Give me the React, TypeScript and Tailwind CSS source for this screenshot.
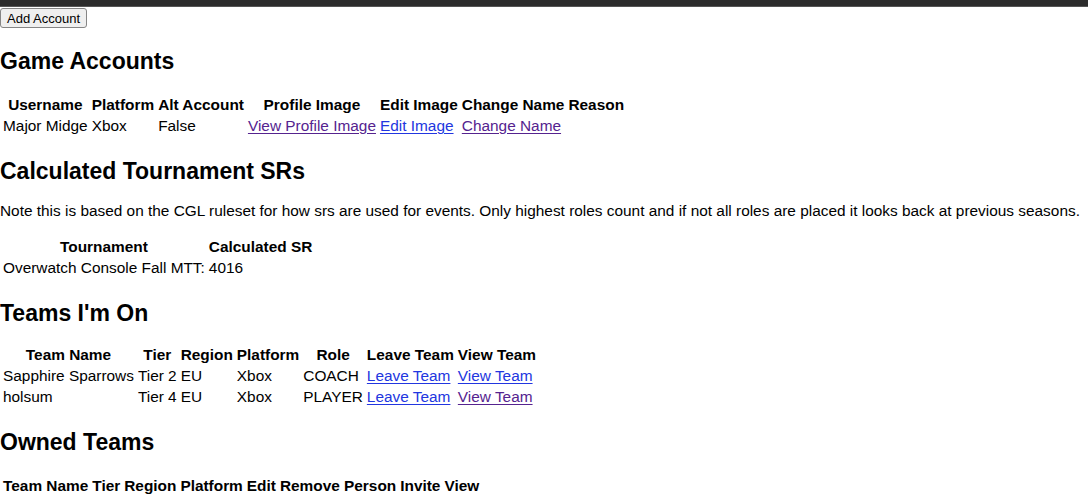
const th = "px-[1px] py-[1px] font-bold text-center"
const td = "px-[1px] py-[1px] text-left"
const blue = "text-[#2236e0] underline underline-offset-2"
const purple = "text-[#55238f] underline underline-offset-2"

const Heading = ({ children, className }: { children: React.ReactNode; className: string }) => (
    <h2 className={`text-[23px] font-bold leading-[26px] text-black ${className}`}>{children}</h2>
)

const Table = ({ children }: { children: React.ReactNode }) => (
    <table className="border-separate border-spacing-[2px]">
        <tbody>{children}</tbody>
    </table>
)

export default function App() {
    return (
        <div className="min-h-screen bg-white text-black font-['Liberation_Sans',Arial,sans-serif] text-[15.4px] leading-[17px]">
            <div className="h-[7px] bg-[#2c2c2c] border-b border-[#555]" />
            <div className="h-[21px] pt-[1px]">
                <button className="h-[20px] bg-[#efefef] border border-[#858585] rounded-[3px] px-[6px] text-[13px] leading-[normal] text-black">
                    Add Account
                </button>
            </div>

            <Heading className="mt-[20px] mb-[19px]">Game Accounts</Heading>
            <Table>
                <tr>
                    <th className={th}>Username</th>
                    <th className={th}>Platform</th>
                    <th className={th}>Alt Account</th>
                    <th className={th}>Profile Image</th>
                    <th className={th}>Edit Image</th>
                    <th className={th}>Change Name</th>
                    <th className={th}>Reason</th>
                </tr>
                <tr>
                    <td className={td}>Major Midge</td>
                    <td className={td}>Xbox</td>
                    <td className={td}>False</td>
                    <td className={td}><a href="#" className={purple}>View Profile Image</a></td>
                    <td className={td}><a href="#" className={blue}>Edit Image</a></td>
                    <td className={td}><a href="#" className={purple}>Change Name</a></td>
                    <td className={td}></td>
                </tr>
            </Table>

            <Heading className="mt-[21px] mb-[18px]">Calculated Tournament SRs</Heading>
            <p className="mt-0 mb-[16px]">
                Note this is based on the CGL ruleset for how srs are used for events. Only highest roles count and if not all roles are placed it looks back at previous seasons.
            </p>
            <Table>
                <tr>
                    <th className={th}>Tournament</th>
                    <th className={th}>Calculated SR</th>
                </tr>
                <tr>
                    <td className={td}>Overwatch Console Fall MTT:</td>
                    <td className={td}>4016</td>
                </tr>
            </Table>

            <Heading className="mt-[21px] mb-[17px]">Teams I'm On</Heading>
            <Table>
                <tr>
                    <th className={th}>Team Name</th>
                    <th className={th}>Tier</th>
                    <th className={th}>Region</th>
                    <th className={th}>Platform</th>
                    <th className={th}>Role</th>
                    <th className={th}>Leave Team</th>
                    <th className={th}>View Team</th>
                </tr>
                <tr>
                    <td className={td}>Sapphire Sparrows</td>
                    <td className={td}>Tier 2</td>
                    <td className={td}>EU</td>
                    <td className={td}>Xbox</td>
                    <td className={td}>COACH</td>
                    <td className={td}><a href="#" className={blue}>Leave Team</a></td>
                    <td className={td}><a href="#" className={blue}>View Team</a></td>
                </tr>
                <tr>
                    <td className={td}>holsum</td>
                    <td className={td}>Tier 4</td>
                    <td className={td}>EU</td>
                    <td className={td}>Xbox</td>
                    <td className={td}>PLAYER</td>
                    <td className={td}><a href="#" className={blue}>Leave Team</a></td>
                    <td className={td}><a href="#" className={purple}>View Team</a></td>
                </tr>
            </Table>

            <Heading className="mt-[21px] mb-[19px]">Owned Teams</Heading>
            <Table>
                <tr>
                    <th className={th}>Team Name</th>
                    <th className={th}>Tier</th>
                    <th className={th}>Region</th>
                    <th className={th}>Platform</th>
                    <th className={th}>Edit</th>
                    <th className={th}>Remove Person</th>
                    <th className={th}>Invite</th>
                    <th className={th}>View</th>
                </tr>
            </Table>
        </div>
    )
}
